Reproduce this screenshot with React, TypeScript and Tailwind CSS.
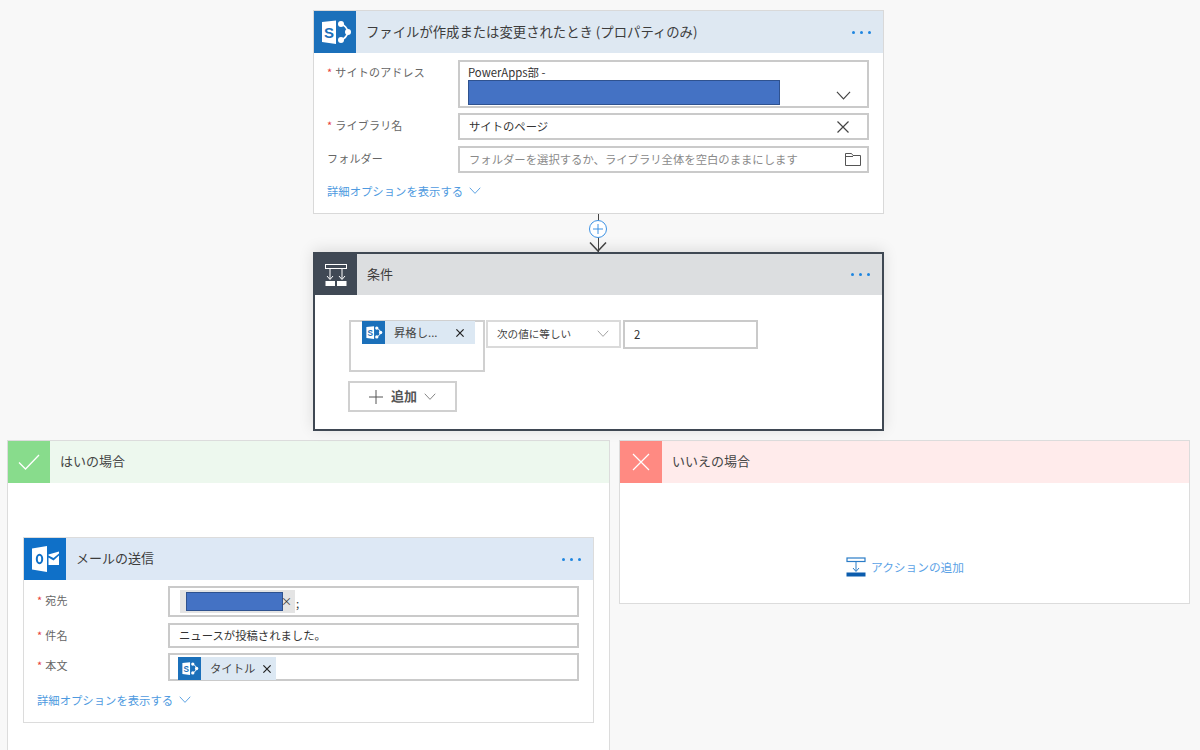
import React from "react";

const F = "font-['Noto_Sans_CJK_JP','Noto_Sans',sans-serif]";

function SpIcon({ s = 42 }: { s?: number }) {
  return (
    <div className="flex items-center justify-center bg-[#1b70ba] shrink-0" style={{ width: s, height: s }}>
      <svg viewBox="0 0 42 42" width={s} height={s}>
        <path d="M27 13 A11 11 0 0 1 34 21 A11 11 0 0 1 27 29" stroke="#fff" strokeWidth="1.6" fill="none" />
        <circle cx="27" cy="13" r="3" fill="#fff" />
        <circle cx="34" cy="21" r="3" fill="#fff" />
        <circle cx="27" cy="29" r="3" fill="#fff" />
        <path d="M8 11 L22 9.5 L22 33 L8 31 Z" fill="#fff" />
        <text x="15" y="26.5" textAnchor="middle" fontSize="15" fontWeight="700" fill="#1b70ba" fontFamily="Liberation Sans">S</text>
      </svg>
    </div>
  );
}

function OutlookIcon() {
  return (
    <div className="flex items-center justify-center bg-[#0f70c8] w-[42px] h-[42px] shrink-0">
      <svg viewBox="0 0 42 42" width="42" height="42">
        <path d="M8 10.5 L23 8 L23 34 L8 31.5 Z" fill="#fff" />
        <path d="M24.5 16.5 L35 13.5 L35 15.5 L29.5 20 L24.5 17.5 Z" fill="#fff" />
        <path d="M24.5 19.5 L29.5 22.5 L35 17.5 L35 27 L24.5 27 Z" fill="#fff" />
        <ellipse cx="15.5" cy="21" rx="2.7" ry="4.2" fill="none" stroke="#0f70c8" strokeWidth="2" />
      </svg>
    </div>
  );
}

function Dots() {
  return (
    <div className="ml-auto mr-[12px] flex gap-[5px]">
      <span className="w-[3px] h-[3px] rounded-full bg-[#1f86e0]" />
      <span className="w-[3px] h-[3px] rounded-full bg-[#1f86e0]" />
      <span className="w-[3px] h-[3px] rounded-full bg-[#1f86e0]" />
    </div>
  );
}

function Chevron({ c = "#444", w = 16 }: { c?: string; w?: number }) {
  return (
    <svg width={w} height={w * 0.6} viewBox="0 0 16 9.6" fill="none" className="shrink-0">
      <path d="M1 1 L8 8.5 L15 1" stroke={c} strokeWidth="1.2" />
    </svg>
  );
}

function Cross({ s = 12, c = "#444", w = 1.2 }: { s?: number; c?: string; w?: number }) {
  return (
    <svg width={s} height={s} viewBox="0 0 12 12" className="shrink-0">
      <path d="M0.5 0.5 L11.5 11.5 M11.5 0.5 L0.5 11.5" stroke={c} strokeWidth={w} fill="none" />
    </svg>
  );
}

function Label({ req, children, w = 131 }: { req?: boolean; children: React.ReactNode; w?: number }) {
  return (
    <div className="shrink-0 text-[11px] leading-[16px] text-[#666] tracking-[0.2px]" style={{ width: w }}>
      {req && <span className="text-[#e8403a] mr-[3px]">*</span>}
      {children}
    </div>
  );
}

function DetailLink() {
  return (
    <div className="flex items-center gap-[6px] text-[11.35px] leading-[16px] text-[#4e9ae0]">
      <span>詳細オプションを表示する</span>
      <Chevron c="#4e9ae0" w={12} />
    </div>
  );
}

function Redact({ w, h }: { w: number; h: number }) {
  return <div className="bg-[#4472c4] border border-[#2f528f] shrink-0" style={{ width: w, height: h }} />;
}

export default function App() {
  return (
    <div className={`${F} w-[1200px] h-[750px] overflow-hidden bg-[#f8f8f8] text-[#444] pt-[10px]`}>
      {/* Trigger */}
      <div className="ml-[313px] w-[571px] h-[204px] bg-white border border-[#d9d9d9] flex flex-col">
        <div className="h-[42px] bg-[#dee8f2] flex items-center shrink-0">
          <SpIcon />
          <span className="ml-[10px] text-[13.35px] text-[#3c3c3c]">ファイルが作成または変更されたとき (プロパティのみ)</span>
          <Dots />
        </div>
        <div className="pl-[13px] pr-[14px] pt-[7px] flex flex-col">
          <div className="flex">
            <div className="pt-[4px]"><Label req>サイトのアドレス</Label></div>
            <div className="h-[48px] flex-1 border-2 border-[#cacaca] pl-[8px] pr-[16px] relative">
              <div className="text-[11.35px] leading-[16px] text-[#333] mt-[2px]">PowerApps部 -</div>
              <Redact w={312} h={25} />
              <div className="absolute right-[16px] bottom-[6px]"><Chevron c="#444" w={15} /></div>
            </div>
          </div>
          <div className="flex mt-[5px]">
            <div className="pt-[4px]"><Label req>ライブラリ名</Label></div>
            <div className="h-[27px] flex-1 border-2 border-[#cacaca] pl-[9px] pr-[18px] flex items-center justify-between">
              <span className="text-[11.35px] text-[#333]">サイトのページ</span>
              <Cross s={12} />
            </div>
          </div>
          <div className="flex mt-[6px]">
            <div className="pt-[4px]"><Label>フォルダー</Label></div>
            <div className="h-[27px] flex-1 border-2 border-[#cacaca] pl-[9px] pr-[6px] flex items-center justify-between">
              <span className="text-[11.35px] text-[#8a8a8a]">フォルダーを選択するか、ライブラリ全体を空白のままにします</span>
              <svg width="16" height="13" viewBox="0 0 16 13" fill="none">
                <path d="M0.5 12.5 V0.5 H6.5 L8 2.5 H15.5 V12.5 Z M0.5 3.5 H8" stroke="#555" strokeWidth="1" />
              </svg>
            </div>
          </div>
          <div className="mt-[10px]"><DetailLink /></div>
        </div>
      </div>

      {/* Connector */}
      <div className="ml-[313px] w-[571px] h-[38px] flex justify-center relative">
        <div className="w-[1px] h-[38px] bg-[#444]" />
        <div className="absolute left-[276px] top-[6px] w-[18px] h-[18px] rounded-full bg-white border border-[#3d92e4] flex items-center justify-center">
          <svg width="10" height="10" viewBox="0 0 10 10"><path d="M5 0 V10 M0 5 H10" stroke="#3d92e4" strokeWidth="1" /></svg>
        </div>
        <svg className="absolute left-[275px] top-[27px]" width="20" height="11" viewBox="0 0 20 11" fill="none">
          <path d="M2 1.5 L10 10 L18 1.5" stroke="#444" strokeWidth="1.5" />
        </svg>
      </div>

      {/* Condition */}
      <div className="relative z-10 ml-[313px] w-[571px] h-[179px] bg-white border-2 border-[#3f4853] shadow-[0_-2px_14px_rgba(0,0,0,0.12)] flex flex-col">
        <div className="h-[41px] bg-[#dcdee0] flex items-center shrink-0">
          <div className="w-[42px] h-[41px] bg-[#404955] shrink-0">
            <svg width="42" height="41" viewBox="0 0 42 41" fill="none">
              <rect x="10.5" y="10.5" width="21" height="4" stroke="#fff" strokeWidth="1" />
              <path d="M15 14.5 V25 M27 14.5 V25" stroke="#fff" strokeWidth="1" />
              <path d="M12 22 L15 25.5 L18 22 M24 22 L27 25.5 L30 22" stroke="#fff" strokeWidth="1" />
              <rect x="10.5" y="27" width="9.5" height="5" fill="#fff" />
              <rect x="22" y="27" width="9.5" height="5" fill="#fff" />
            </svg>
          </div>
          <span className="ml-[10px] -mt-[2px] text-[13px] text-[#3c3c3c]">条件</span>
          <Dots />
        </div>
        <div className="pl-[33px] pt-[25px] flex flex-col">
          <div className="flex items-start gap-[1px] pl-[1px]">
            <div className="w-[136px] h-[52px] border-2 border-[#d0d0d0] pl-[11px] pr-[10px]">
              <div className="flex items-center bg-[#dce8f3] h-[23px] w-[113px] -mt-[1px]">
                <SpIcon s={23} />
                <span className="ml-[9px] text-[11.35px] text-[#444]">昇格し...</span>
                <span className="ml-auto mr-[11px]"><Cross s={8} c="#222" w={1.8} /></span>
              </div>
            </div>
            <div className="w-[135px] h-[28px] border-2 border-[#dadada] pl-[9px] pr-[10px] flex items-center justify-between">
              <span className="text-[10.6px] text-[#444]">次の値に等しい</span>
              <Chevron c="#999" w={12} />
            </div>
            <div className="ml-[1px] w-[135px] h-[29px] border-2 border-[#cacaca] pl-[9px] flex items-center">
              <span className="text-[11.35px] text-[#333]">2</span>
            </div>
          </div>
          <div className="mt-[9px] w-[109px] h-[31px] border-2 border-[#d0d0d0] pl-[19px] flex items-center">
            <svg width="14" height="14" viewBox="0 0 14 14"><path d="M7 0 V14 M0 7 H14" stroke="#555" strokeWidth="1" /></svg>
            <span className="ml-[8px] -mt-[2px] text-[13px] font-bold text-[#555]">追加</span>
            <span className="ml-[7px]"><Chevron c="#777" w={12} /></span>
          </div>
        </div>
      </div>

      {/* Branches */}
      <div className="flex mt-[9px] pl-[7px] items-start">
        <div className="w-[603px] h-[320px] bg-white border border-[#dcdcdc] shrink-0 flex flex-col">
          <div className="h-[42px] bg-[#edf8ee] flex items-center shrink-0">
            <div className="w-[42px] h-[42px] bg-[#88dc8c] flex items-center justify-center shrink-0">
              <svg width="22" height="16" viewBox="0 0 22 16" fill="none"><path d="M1 8.5 L7.5 15 L21 1" stroke="#fff" strokeWidth="1.3" /></svg>
            </div>
            <span className="ml-[10px] -mt-[2px] text-[13px] text-[#444]">はいの場合</span>
          </div>
          <div className="pl-[15px] pt-[54px]">
            <div className="w-[571px] h-[186px] bg-white border border-[#dcdcdc] flex flex-col">
              <div className="h-[42px] bg-[#dde8f5] flex items-center shrink-0">
                <OutlookIcon />
                <span className="ml-[10px] -mt-[2px] text-[13px] text-[#3c3c3c]">メールの送信</span>
                <Dots />
              </div>
              <div className="pl-[13px] pr-[14px] pt-[6px] flex flex-col">
                <div className="flex">
                  <div className="pt-[6px]"><Label req w={131}>宛先</Label></div>
                  <div className="h-[31px] flex-1 border-2 border-[#cacaca] pl-[10px] flex items-start">
                    <div className="bg-[#e4e4e4] h-[23px] w-[115px] flex items-center pl-[6px] shrink-0 mt-[2px]">
                      <Redact w={97} h={19} />
                      <span className="text-[11px] text-[#333] -ml-[2px]">×</span>
                    </div>
                    <span className="text-[11.35px] mt-[7px] ml-[1px] text-[#333]">;</span>
                  </div>
                </div>
                <div className="flex mt-[6px]">
                  <div className="pt-[4px]"><Label req>件名</Label></div>
                  <div className="h-[25px] flex-1 border-2 border-[#cacaca] pl-[9px] flex items-center">
                    <span className="text-[11.35px] text-[#333]">ニュースが投稿されました。</span>
                  </div>
                </div>
                <div className="flex mt-[5px]">
                  <div className="pt-[4px]"><Label req>本文</Label></div>
                  <div className="h-[28px] flex-1 border-2 border-[#cacaca] pl-[8px] flex items-start">
                    <div className="flex items-center bg-[#dce8f3] h-[23px] w-[98px] mt-[2px]">
                      <SpIcon s={23} />
                      <span className="ml-[9px] text-[11.35px] text-[#444]">タイトル</span>
                      <span className="ml-auto mr-[5px]"><Cross s={8} c="#222" w={1.8} /></span>
                    </div>
                  </div>
                </div>
                <div className="mt-[11px]"><DetailLink /></div>
              </div>
            </div>
          </div>
        </div>

        <div className="ml-[9px] w-[571px] h-[164px] bg-white border border-[#dcdcdc] flex flex-col">
          <div className="h-[42px] bg-[#ffebeb] flex items-center shrink-0">
            <div className="w-[42px] h-[42px] bg-[#ff8a82] flex items-center justify-center shrink-0">
              <svg width="18" height="18" viewBox="0 0 18 18" fill="none"><path d="M1 1 L17 17 M17 1 L1 17" stroke="#fff" strokeWidth="1.2" /></svg>
            </div>
            <span className="ml-[10px] -mt-[2px] text-[13px] text-[#444]">いいえの場合</span>
          </div>
          <div className="flex-1 flex items-center justify-center pt-[47px] pl-[1px]">
            <svg width="20" height="20" viewBox="0 0 20 20" fill="none" className="mr-[5px]">
              <rect x="1" y="1" width="18" height="3.5" stroke="#2a7cc7" strokeWidth="1.2" />
              <path d="M10 4.5 V14 M7 11 L10 14.5 L13 11" stroke="#2a7cc7" strokeWidth="1" />
              <rect x="0.5" y="15.5" width="19" height="4" fill="#0b5cad" />
            </svg>
            <span className="text-[11.7px] text-[#5ba2e6]">アクションの追加</span>
          </div>
        </div>
      </div>
    </div>
  );
}
